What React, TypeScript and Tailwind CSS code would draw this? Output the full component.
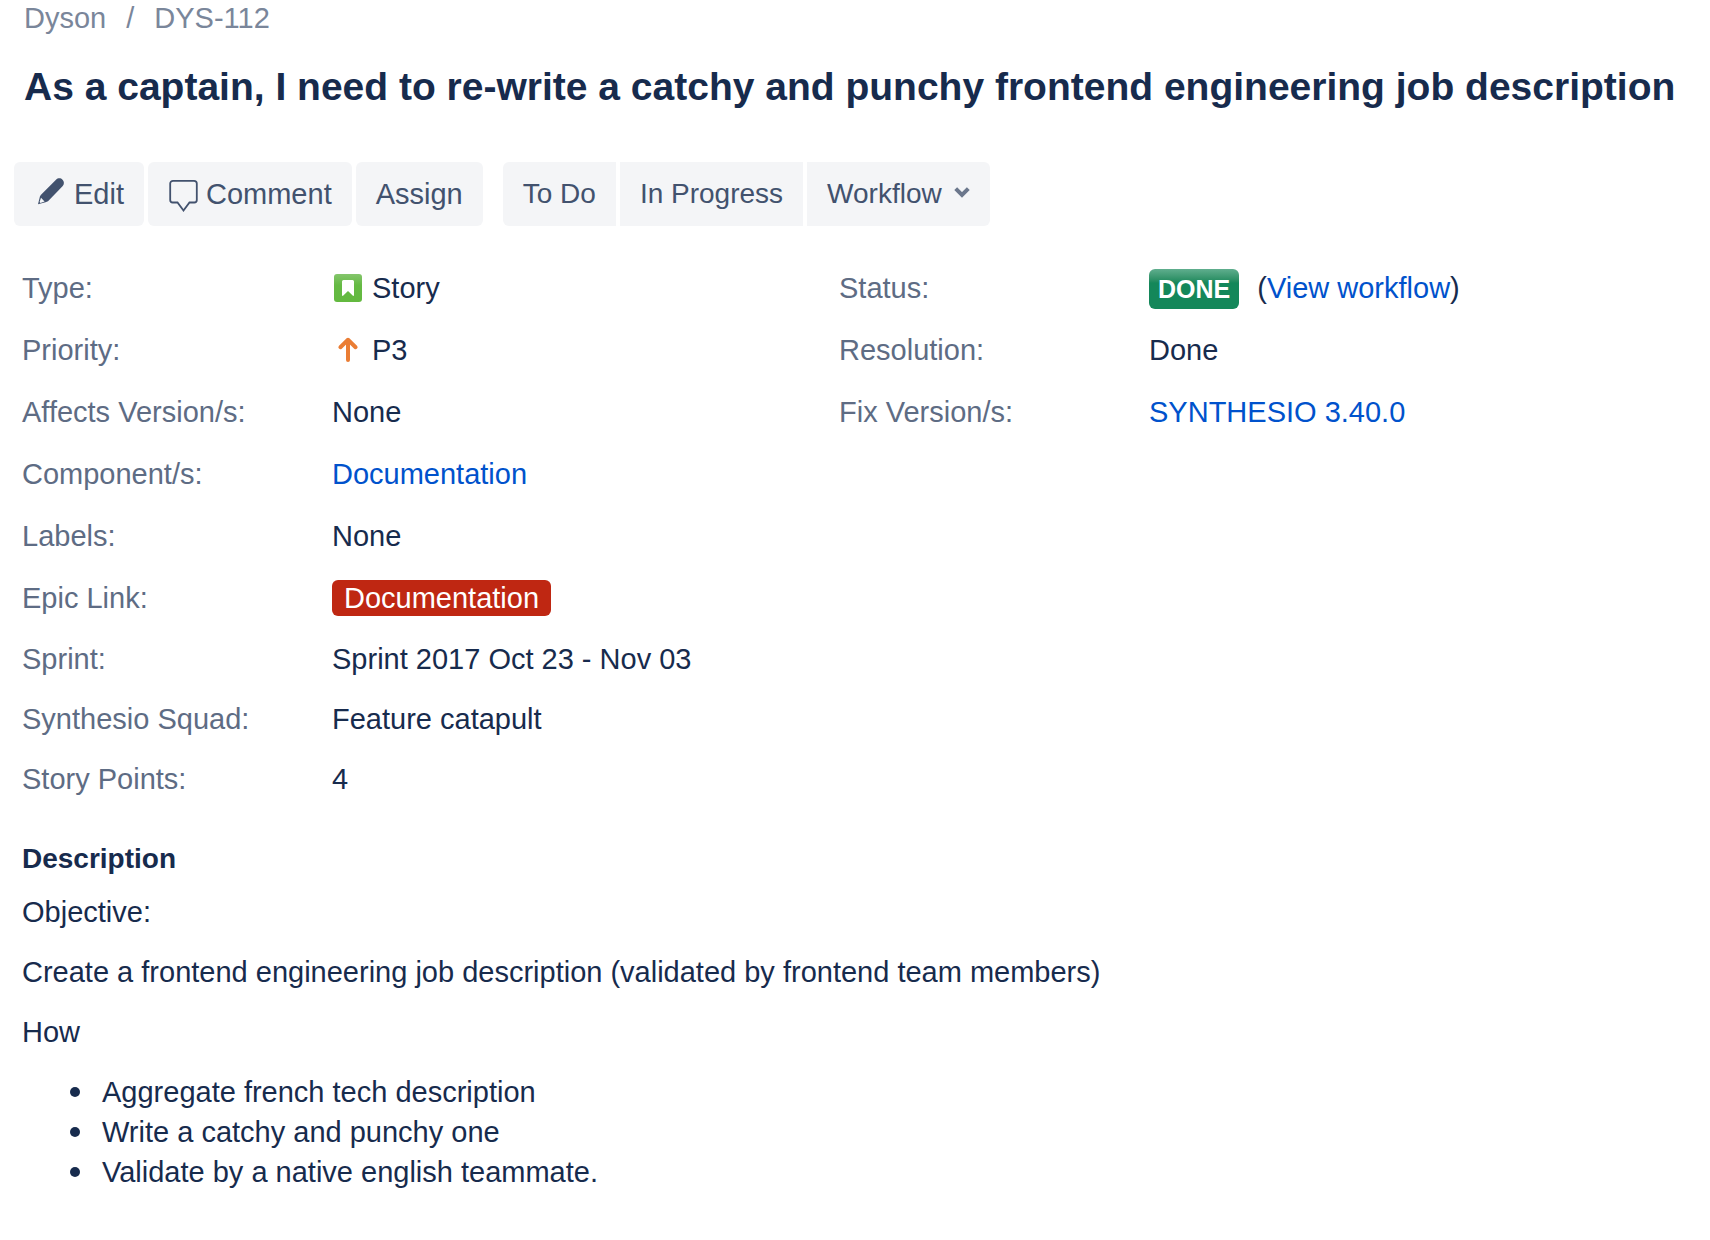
import type { ReactNode } from 'react';

function PencilIcon() {
  return (
    <svg className="h-8 w-8 shrink-0" viewBox="0 0 32 32" fill="none" aria-hidden="true">
      <path
        d="M22 1.800C24 -.2 26.800 0 28.500 1.700C30.300 3.500 30.400 6.200 28.500 8.200L14 23.200L11.500 24.200L4 26.200L6 18.200L7 16.800Z"
        fill="#42526e"
      />
      <path d="M7 19.800L10.600 23.400L6.400 24.900L5.600 24.100Z" fill="#f4f5f7" />
    </svg>
  );
}

function CommentIcon() {
  return (
    <svg className="h-9 w-[30px] shrink-0" viewBox="0 0 30 36" fill="none" aria-hidden="true">
      <path
        d="M5 4.800H26a2.800 2.800 0 0 1 2.800 2.800V24a2.500 2.500 0 0 1-2.500 2.500H21.500L15.500 34.500L9.500 26.500H4.700A2.500 2.500 0 0 1 2.200 24V7.600A2.800 2.800 0 0 1 5 4.800z"
        stroke="#42526e"
        strokeWidth="1.800"
      />
    </svg>
  );
}

function ChevronIcon() {
  return (
    <svg className="h-6 w-4 shrink-0" viewBox="0 0 16 24" fill="none" aria-hidden="true">
      <path d="M1.700 6.700L8 13 14.300 6.700" stroke="#6b778c" strokeWidth="4" />
    </svg>
  );
}

function StoryIcon() {
  return (
    <svg className="size-7 shrink-0" viewBox="0 0 28 28" aria-hidden="true">
      <defs>
        <linearGradient id="story" x1="0" y1="0" x2="0" y2="1">
          <stop offset="0" stopColor="#84c56c" />
          <stop offset="0.400" stopColor="#65ba43" />
          <stop offset="1" stopColor="#63b93f" />
        </linearGradient>
      </defs>
      <rect width="28" height="28" rx="3" fill="url(#story)" />
      <path d="M9.500 6h9a1.500 1.500 0 0 1 1.500 1.500v14l-.8.500-5.200-5-5.200 5-.8-.5v-14A1.500 1.500 0 0 1 9.500 6z" fill="#fff" />
    </svg>
  );
}

function PriorityIcon() {
  return (
    <svg className="size-7 shrink-0" viewBox="0 0 28 28" fill="none" aria-hidden="true">
      <path
        d="M14 24V3.800M6.400 11.200L14 3.800l7.600 7.400"
        stroke="#ea7d34"
        strokeWidth="4"
        strokeLinecap="round"
        strokeLinejoin="round"
      />
    </svg>
  );
}

function ToolButton({ children, shape }: { children: ReactNode; shape: string }) {
  return (
    <button type="button" className={`flex h-16 items-center bg-[#f4f5f7] px-5 text-[#42526e] ${shape}`}>
      {children}
    </button>
  );
}

function Field({ label, children, tall }: { label: string; children: ReactNode; tall?: boolean }) {
  return (
    <div className={tall ? 'flex h-[62px] items-center' : 'flex h-[60px] items-center'}>
      <dt className="w-[310px] shrink-0 text-[#5e6c84]">{label}</dt>
      <dd className="flex items-baseline">{children}</dd>
    </div>
  );
}

function TextLink({ children }: { children: ReactNode }) {
  return (
    <a href="#" className="text-[#0052cc]">
      {children}
    </a>
  );
}

const steps = [
  'Aggregate french tech description',
  'Write a catchy and punchy one',
  'Validate by a native english teammate.',
];

export default function App() {
  return (
    <main className="min-h-screen bg-white font-['Liberation_Sans',Arial,sans-serif] text-[29px] leading-10 text-[#172b4d]">
      <nav aria-label="Breadcrumb" className="flex gap-5 px-6 leading-9 text-[#7a869a]">
        <a href="#">Dyson</a>
        <span>/</span>
        <a href="#">DYS-112</a>
      </nav>

      <h1 className="mt-[25px] px-6 text-[39px] leading-[52px] font-bold whitespace-nowrap">
        As a captain, I need to re-write a catchy and punchy frontend engineering job description
      </h1>

      <div className="mt-[49px] flex gap-5 px-[14px]">
        <div className="flex gap-1">
          <ToolButton shape="gap-2 rounded-md">
            <PencilIcon />
            Edit
          </ToolButton>
          <ToolButton shape="gap-2 rounded-md">
            <CommentIcon />
            Comment
          </ToolButton>
          <ToolButton shape="rounded-md">Assign</ToolButton>
        </div>
        <div className="flex gap-1 text-[28px]">
          <ToolButton shape="rounded-l-md">To Do</ToolButton>
          <ToolButton shape="">In Progress</ToolButton>
          <ToolButton shape="gap-3 rounded-r-md">
            Workflow
            <ChevronIcon />
          </ToolButton>
        </div>
      </div>

      <div className="mt-[31px] grid grid-cols-[817px_1fr] px-[22px]">
        <dl>
          <Field label="Type:" tall>
            <span className="flex items-center gap-[10px] pl-0.5">
              <StoryIcon />
              Story
            </span>
          </Field>
          <Field label="Priority:" tall>
            <span className="flex items-center gap-[10px] pl-0.5">
              <PriorityIcon />
              P3
            </span>
          </Field>
          <Field label="Affects Version/s:" tall>None</Field>
          <Field label="Component/s:" tall>
            <TextLink>Documentation</TextLink>
          </Field>
          <Field label="Labels:" tall>None</Field>
          <Field label="Epic Link:" tall>
            <a href="#" className="rounded-md bg-[#bf2712] px-3 leading-9 text-white">
              Documentation
            </a>
          </Field>
          <Field label="Sprint:">Sprint 2017 Oct 23 - Nov 03</Field>
          <Field label="Synthesio Squad:">Feature catapult</Field>
          <Field label="Story Points:">4</Field>
        </dl>
        <dl>
          <Field label="Status:" tall>
            <span className="mr-[18px] rounded-md bg-linear-to-b from-[#5fae8e] via-[#14875a] via-35% to-[#14875a] px-[9px] text-[25px] leading-10 font-bold text-white">
              DONE
            </span>
            (<TextLink>View workflow</TextLink>)
          </Field>
          <Field label="Resolution:" tall>Done</Field>
          <Field label="Fix Version/s:" tall>
            <TextLink>SYNTHESIO 3.40.0</TextLink>
          </Field>
        </dl>
      </div>

      <section className="mt-[30px] px-[22px]">
        <h2 className="text-[28px] font-bold">Description</h2>
        <p className="mt-[13px]">Objective:</p>
        <p className="mt-5">Create a frontend engineering job description (validated by frontend team members)</p>
        <p className="mt-5">How</p>
        <ul className="mt-5 pl-12">
          {steps.map((step) => (
            <li
              key={step}
              className="flex items-center gap-[22px] before:size-[10px] before:rounded-full before:bg-[#172b4d]"
            >
              {step}
            </li>
          ))}
        </ul>
      </section>
    </main>
  );
}
